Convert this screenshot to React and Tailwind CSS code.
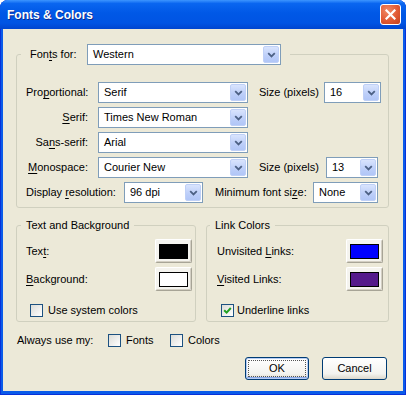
function Chevron() {
  return (
    <svg width="9" height="6" viewBox="0 0 9 6">
      <path d="M1.2 1.2l3.3 3.3 3.3-3.3" fill="none" stroke="#4d6185" strokeWidth="1.8" />
    </svg>
  );
}

function Select({ value, className }) {
  return (
    <div className={`flex h-[21px] items-center border border-[#7f9db9] bg-white ${className}`}>
      <span className="flex-1 truncate pl-[5px]">{value}</span>
      <span className="mr-px flex h-[17px] w-[16px] items-center justify-center rounded-[2px] border border-[#bfd0f7] bg-[linear-gradient(180deg,#d9e4fd,#bccef9_60%,#b1c6f7)]">
        <Chevron />
      </span>
    </div>
  );
}

function Checkbox({ checked }) {
  return (
    <span className="flex h-[13px] w-[13px] shrink-0 items-center justify-center border border-[#1c5180] bg-[linear-gradient(135deg,#dcdcd7,#ffffff)]">
      {checked && (
        <svg width="9" height="9" viewBox="0 0 9 9">
          <path d="M1.2 4.2l2.4 2.4L7.8 2" fill="none" stroke="#21a121" strokeWidth="2" />
        </svg>
      )}
    </span>
  );
}

function ColorButton({ swatch }) {
  return (
    <div className="flex h-[24px] w-[37px] items-center justify-center rounded-[2px] border border-[#a7a496] border-l-white border-t-white bg-[#f5f4ef] shadow-[inset_-1px_-1px_0_#d4d0c4]">
      <div className={`h-[15px] w-[29px] border border-black ${swatch}`} />
    </div>
  );
}

function U({ children }) {
  return <span className="underline underline-offset-[2px]">{children}</span>;
}

export default function App() {
  return (
    <div className="flex h-[395px] w-[406px] flex-col overflow-hidden rounded-t-[8px] bg-[#0a5be9] font-['Liberation_Sans',Arial,sans-serif] text-[11px] text-black shadow-[inset_1px_0_#0831d9,inset_-1px_0_#0831d9,inset_0_-1px_#0831d9]">
      {/* title bar */}
      <div className="flex h-[29px] shrink-0 items-center justify-between bg-[linear-gradient(180deg,#3d95ff_0%,#0a66f0_12%,#0058e6_45%,#0054e3_80%,#0045cf_100%)] pl-[7px] pr-[5px]">
        <span className="text-[12px] font-bold text-white [text-shadow:1px_1px_0_#0f2a8c]">Fonts &amp; Colors</span>
        <div className="flex h-[21px] w-[21px] items-center justify-center rounded-[3px] border border-white bg-[radial-gradient(circle_at_35%_30%,#f08a66,#e15a34_55%,#c4401c)]">
          <svg width="11" height="11" viewBox="0 0 11 11">
            <path d="M1.5 1.5l8 8M9.5 1.5l-8 8" stroke="white" strokeWidth="2.2" strokeLinecap="square" />
          </svg>
        </div>
      </div>

      {/* body */}
      <div className="mx-[3px] mb-[4px] flex flex-1 flex-col bg-[#ece9d8] pl-[13px] pt-[15px]">
        <fieldset className="w-[373px] rounded-[3px] border border-[#d0d0bf]">
          <legend className="ml-[4px] px-[9px]">
            <div className="flex items-center">
              <span className="w-[57px]">
                Fon<U>t</U>s for:
              </span>
              <Select value="Western" className="w-[194px]" />
            </div>
          </legend>
          <div className="flex flex-col gap-[4px] pb-[4px] pl-[9px] pt-[17px]">
            <div className="flex h-[21px] items-center">
              <span className="w-[62px] whitespace-nowrap text-right">
                Pro<U>p</U>ortional:
              </span>
              <Select value="Serif" className="ml-[10px] w-[150px]" />
              <span className="ml-[11px] w-[65px] whitespace-nowrap">Size (pixels)</span>
              <Select value="16" className="w-[57px]" />
            </div>
            <div className="flex h-[21px] items-center">
              <span className="w-[62px] whitespace-nowrap text-right">
                <U>S</U>erif:
              </span>
              <Select value="Times New Roman" className="ml-[10px] w-[150px]" />
            </div>
            <div className="flex h-[21px] items-center">
              <span className="w-[62px] whitespace-nowrap text-right">
                Sa<U>n</U>s-serif:
              </span>
              <Select value="Arial" className="ml-[10px] w-[150px]" />
            </div>
            <div className="flex h-[21px] items-center">
              <span className="w-[62px] whitespace-nowrap text-right">
                <U>M</U>onospace:
              </span>
              <Select value="Courier New" className="ml-[10px] w-[150px]" />
              <span className="ml-[11px] w-[67px] whitespace-nowrap">Size (pixels)</span>
              <Select value="13" className="w-[52px]" />
            </div>
            <div className="flex h-[21px] items-center">
              <span className="w-[98px] whitespace-nowrap">
                Display <U>r</U>esolution:
              </span>
              <Select value="96 dpi" className="w-[79px]" />
              <span className="ml-[12px] w-[98px] whitespace-nowrap">
                Minimum font si<U>z</U>e:
              </span>
              <Select value="None" className="w-[65px]" />
            </div>
          </div>
        </fieldset>

        <div className="mt-[10px] flex gap-[10px]">
          <fieldset className="w-[180px] rounded-[3px] border border-[#d0d0bf]">
            <legend className="ml-[4px] px-[5px] leading-[14px]">Text and Background</legend>
            <div className="flex flex-col pb-[3px] pl-[9px] pr-[3px] pt-[7px]">
              <div className="flex h-[24px] items-center justify-between">
                <span>
                  Tex<U>t</U>:
                </span>
                <ColorButton swatch="bg-black" />
              </div>
              <div className="mt-[4px] flex h-[24px] items-center justify-between">
                <span>
                  <U>B</U>ackground:
                </span>
                <ColorButton swatch="bg-white" />
              </div>
              <div className="mt-[11px] flex h-[16px] items-center gap-[5px] pl-[4px]">
                <Checkbox />
                <span>Use system colors</span>
              </div>
            </div>
          </fieldset>

          <fieldset className="w-[183px] rounded-[3px] border border-[#d0d0bf]">
            <legend className="ml-[3px] px-[5px] leading-[14px]">Link Colors</legend>
            <div className="flex flex-col pb-[3px] pl-[10px] pr-[5px] pt-[7px]">
              <div className="flex h-[24px] items-center justify-between">
                <span>
                  Unvisited <U>L</U>inks:
                </span>
                <ColorButton swatch="bg-[#0000ff]" />
              </div>
              <div className="mt-[4px] flex h-[24px] items-center justify-between">
                <span>
                  <U>V</U>isited Links:
                </span>
                <ColorButton swatch="bg-[#551a8b]" />
              </div>
              <div className="mt-[11px] flex h-[16px] items-center gap-[3px] pl-[4px]">
                <Checkbox checked />
                <span>Underline links</span>
              </div>
            </div>
          </fieldset>
        </div>

        <div className="ml-[1px] mt-[10px] flex h-[16px] items-center">
          <span className="w-[91px] whitespace-nowrap">Always use my:</span>
          <div className="flex w-[62px] items-center gap-[5px]">
            <Checkbox />
            <span>Fonts</span>
          </div>
          <div className="flex items-center gap-[5px]">
            <Checkbox />
            <span>Colors</span>
          </div>
        </div>

        <div className="mt-[9px] flex justify-end gap-[13px] pr-[16px]">
          <button
            type="button"
            className="flex h-[23px] w-[64px] items-center justify-center rounded-[3px] border border-[#003c74] bg-[linear-gradient(180deg,#ffffff,#f3f3ef_75%,#dcd8cc)] p-[2px] shadow-[inset_0_0_0_1px_#b7cdf5,inset_0_-1px_0_1px_#8aa9e8]"
          >
            <span className="flex h-full w-full items-center justify-center outline-1 outline-dotted outline-[#555] -outline-offset-1">
              OK
            </span>
          </button>
          <button
            type="button"
            className="flex h-[23px] w-[65px] items-center justify-center rounded-[3px] border border-[#003c74] bg-[linear-gradient(180deg,#ffffff,#f3f3ef_75%,#dcd8cc)]"
          >
            Cancel
          </button>
        </div>
      </div>
    </div>
  );
}
